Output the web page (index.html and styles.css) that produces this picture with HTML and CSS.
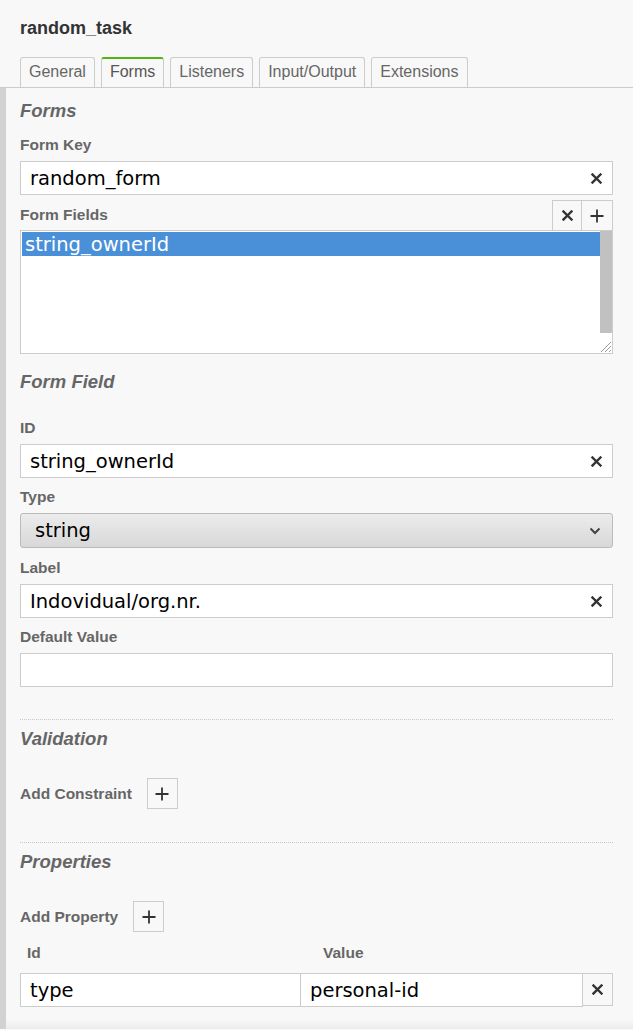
FILE: index.html
```html
<!DOCTYPE html>
<html>
<head>
<meta charset="utf-8">
<link rel="stylesheet" href="styles.css">
</head>
<body>
<div class="header">
  <div class="title">random_task</div>
</div>
<div class="tabs">
  <div class="tab">General</div>
  <div class="tab active">Forms</div>
  <div class="tab">Listeners</div>
  <div class="tab">Input/Output</div>
  <div class="tab">Extensions</div>
</div>
<div class="panel">
  <div class="h2 first">Forms</div>

  <div class="label lbl-first">Form Key</div>
  <div class="field">
    <input class="text" value="random_form">
    <span class="clear"><svg width="11" height="11" viewBox="0 0 11 11"><path d="M1.5 1.5 L9.5 9.5 M9.5 1.5 L1.5 9.5" stroke="#333" stroke-width="2.4" stroke-linecap="square"/></svg></span>
  </div>

  <div class="list-head">
    <div class="label">Form Fields</div>
    <div class="btns">
      <span class="sq"><svg width="11" height="11" viewBox="0 0 11 11"><path d="M1.5 1.5 L9.5 9.5 M9.5 1.5 L1.5 9.5" stroke="#333" stroke-width="2.4" stroke-linecap="square"/></svg></span>
      <span class="sq"><svg width="14" height="14" viewBox="0 0 14 14"><path d="M7 0.5 V13.5 M0.5 7 H13.5" stroke="#333" stroke-width="1.8"/></svg></span>
    </div>
  </div>
  <div class="list">
    <div class="options">
      <div class="option selected">string_ownerId</div>
    </div>
    <div class="scroll"></div>
    <svg class="grip" width="14" height="14" viewBox="0 0 14 14"><path d="M13 3 L3 13 M13 7 L7 13 M13 11 L11 13" stroke="#999" stroke-width="1"/></svg>
  </div>

  <div class="h2 sec2">Form Field</div>

  <div class="label lbl-id">ID</div>
  <div class="field">
    <input class="text" value="string_ownerId">
    <span class="clear"><svg width="11" height="11" viewBox="0 0 11 11"><path d="M1.5 1.5 L9.5 9.5 M9.5 1.5 L1.5 9.5" stroke="#333" stroke-width="2.4" stroke-linecap="square"/></svg></span>
  </div>

  <div class="label">Type</div>
  <div class="select">
    <span>string</span>
    <svg width="12" height="8" viewBox="0 0 12 8"><path d="M1.5 1.5 L6 6 L10.5 1.5" fill="none" stroke="#444" stroke-width="2"/></svg>
  </div>

  <div class="label lbl-label">Label</div>
  <div class="field">
    <input class="text" value="Indovidual/org.nr.">
    <span class="clear"><svg width="11" height="11" viewBox="0 0 11 11"><path d="M1.5 1.5 L9.5 9.5 M9.5 1.5 L1.5 9.5" stroke="#333" stroke-width="2.4" stroke-linecap="square"/></svg></span>
  </div>

  <div class="label">Default Value</div>
  <div class="field">
    <input class="text" value="">
  </div>

  <div class="sep"></div>
  <div class="h2 sec3">Validation</div>
  <div class="add-row">
    <span class="label inline">Add Constraint</span>
    <span class="sq add"><svg width="14" height="14" viewBox="0 0 14 14"><path d="M7 0.5 V13.5 M0.5 7 H13.5" stroke="#333" stroke-width="1.8"/></svg></span>
  </div>

  <div class="sep sep2"></div>
  <div class="h2 sec3">Properties</div>
  <div class="add-row">
    <span class="label inline">Add Property</span>
    <span class="sq add"><svg width="14" height="14" viewBox="0 0 14 14"><path d="M7 0.5 V13.5 M0.5 7 H13.5" stroke="#333" stroke-width="1.8"/></svg></span>
  </div>

  <div class="table-head">
    <div class="col-id label">Id</div>
    <div class="col-val label">Value</div>
  </div>
  <div class="table-row">
    <input class="cell cell-id" value="type">
    <input class="cell cell-val" value="personal-id">
    <span class="sq row-x"><svg width="11" height="11" viewBox="0 0 11 11"><path d="M1.5 1.5 L9.5 9.5 M9.5 1.5 L1.5 9.5" stroke="#333" stroke-width="2.4" stroke-linecap="square"/></svg></span>
  </div>
  <div class="fade"></div>
</div>
</body>
</html>
```
FILE: styles.css
```css
html, body {
  margin: 0;
  padding: 0;
  background: #f8f8f8;
  font-family: "Liberation Sans", Arial, sans-serif;
  height: 100%;
  overflow: hidden;
}
.header {
  padding: 18px 20px 0 20px;
}
.title {
  font-size: 18px;
  line-height: 20px;
  font-weight: bold;
  color: #333;
}
.tabs {
  margin-top: 19px;
  display: flex;
  gap: 6px;
  padding-left: 20px;
  border-bottom: 1px solid #ccc;
}
.tab {
  height: 29px;
  line-height: 27px;
  padding: 0 8px;
  border: 1px solid #ccc;
  border-bottom: none;
  border-radius: 3px 3px 0 0;
  font-size: 16px;
  color: #666;
  background: #f8f8f8;
}
.tab.active {
  border-top: 2px solid #52b415;
  height: 28px;
  line-height: 26px;
  color: #555;
}
.panel {
  border-left: 6px solid #d2d2d2;
  padding: 0 20px 0 14px;
}
.h2 {
  font-size: 18.5px;
  line-height: 22px;
  font-weight: bold;
  font-style: italic;
  color: #666;
}
.h2.first { padding-top: 12px; }
.h2.sec2 { margin-top: 17px; }
.h2.sec3 { margin-top: 8px; }
.label {
  font-size: 15.5px;
  line-height: 18px;
  font-weight: bold;
  color: #666;
  margin-top: 10px;
}
.label.lbl-first { margin-top: 14px; }
.label.lbl-id { margin-top: 26px; }
.label.lbl-label { margin-top: 11px; }
.label.inline { margin-top: 0; }
.field {
  margin-top: 7px;
  height: 32px;
  border: 1px solid #ccc;
  background: #fff;
  display: flex;
  align-items: center;
}
.text, .cell {
  flex: 1;
  min-width: 0;
  border: none;
  outline: none;
  background: transparent;
  font-family: "DejaVu Sans", sans-serif;
  font-size: 19.5px;
  color: #000;
  padding: 0 0 0 9px;
  height: 32px;
}
.clear {
  width: 32px;
  height: 32px;
  display: flex;
  align-items: center;
  justify-content: center;
}
.list-head {
  margin-top: 5px;
  display: flex;
  justify-content: space-between;
  align-items: center;
  height: 30px;
}
.list-head .label { margin-top: 0; }
.btns { display: flex; }
.sq {
  box-sizing: border-box;
  width: 31px;
  height: 31px;
  border: 1px solid #ccc;
  background: #f8f8f8;
  display: flex;
  align-items: center;
  justify-content: center;
}
.btns .sq { width: 30px; height: 31px; margin-bottom: -1px; }
.btns .sq + .sq { border-left: none; width: 31px; }
.list {
  position: relative;
  height: 122px;
  border: 1px solid #ccc;
  background: #fff;
  display: flex;
  align-items: flex-start;
}
.options {
  flex: 1;
  padding: 1px 0 0 1px;
}
.option {
  height: 24px;
  line-height: 25px;
  padding-left: 3px;
  font-family: "DejaVu Sans", sans-serif;
  font-size: 19.5px;
}
.option.selected {
  background: #4a90d9;
  color: #fff;
}
.scroll {
  width: 12px;
  height: 102px;
  background: #c1c1c1;
}
.grip {
  position: absolute;
  right: 0;
  bottom: 0;
}
.select {
  margin-top: 7px;
  box-sizing: border-box;
  height: 35px;
  border: 1px solid #bbb;
  border-radius: 3px;
  background: linear-gradient(#ececec, #d8d8d8);
  display: flex;
  align-items: center;
  justify-content: space-between;
  padding: 0 11px 0 14px;
  font-family: "DejaVu Sans", sans-serif;
  font-size: 19.5px;
  color: #000;
}
.sep {
  margin-top: 32px;
  border-top: 1px dotted #c8c8c8;
}
.sep.sep2 { margin-top: 33px; }
.add-row {
  margin-top: 28px;
  display: flex;
  align-items: center;
  gap: 15px;
}
.table-head {
  margin-top: 12px;
  display: flex;
}
.table-head .label { margin-top: 0; }
.col-id { width: 273px; padding-left: 7px; }
.col-val { padding-left: 23px; }
.table-row {
  margin-top: 11px;
  display: flex;
  height: 34px;
}
.cell {
  box-sizing: border-box;
  height: 34px;
  border: 1px solid #ccc;
  background: #fff;
  flex: none;
}
.cell-id { width: 281px; }
.cell-val { width: 282px; border-left: none; }
.row-x {
  width: 31px;
  height: 33px;
  border-left: none;
}
.fade {
  margin-top: 12px;
  height: 10px;
  margin-left: -14px;
  margin-right: -20px;
  background: linear-gradient(#f8f8f8, #ececec);
}
```
